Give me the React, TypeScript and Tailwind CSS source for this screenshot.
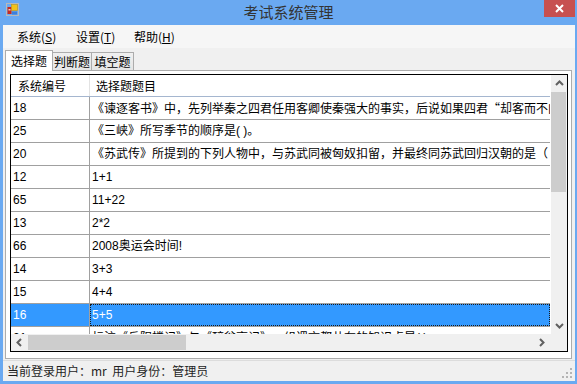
import type { ReactNode } from "react";

const Q = ({ c }: { c: string }) => (
  <span className="inline-block w-[12px] text-right font-['Noto_Sans_CJK_SC',sans-serif]">{c}</span>
);

const rows: [string, ReactNode][] = [
  [
    "18",
    <>
      《谏逐客书》中，先列举秦之四君任用客卿使秦强大的事实，后说如果四君
      <Q c="“" />
      却客而不内，疏士而不用”
    </>,
  ],
  ["25", "《三峡》所写季节的顺序是( )。"],
  ["20", "《苏武传》所提到的下列人物中，与苏武同被匈奴扣留，并最终同苏武回归汉朝的是（ ）"],
  ["12", "1+1"],
  ["65", "11+22"],
  ["13", "2*2"],
  ["66", "2008奥运会时间!"],
  ["14", "3+3"],
  ["15", "4+4"],
  ["16", "5+5"],
  ["21", "标注《岳阳楼记》与《醉翁亭记》一组课文都共有的知识点是( )"],
];

const Chevron = ({ dir }: { dir: "up" | "down" | "left" | "right" }) => {
  const pts = {
    up: "1,6 4.5,2.5 8,6",
    down: "1,3 4.5,6.5 8,3",
    left: "6,1 2.5,4.5 6,8",
    right: "3,1 6.5,4.5 3,8",
  }[dir];
  return (
    <svg width="9" height="9" viewBox="0 0 9 9">
      <polyline points={pts} fill="none" stroke="#606060" strokeWidth="2" />
    </svg>
  );
};

const AppIcon = () => (
  <svg width="13" height="13" viewBox="0 0 13 13">
    <rect x="0.5" y="0.5" width="12" height="12" fill="none" stroke="#b9b9b9" />
    <rect x="1.5" y="4" width="4" height="7" fill="#c8281e" />
    <rect x="2.5" y="6" width="2" height="1.5" fill="#f4d0c0" />
    <rect x="5.5" y="1.5" width="6" height="6" fill="#f2c21b" stroke="#c89a10" strokeWidth="0.6" />
    <rect x="6" y="8.5" width="5" height="3" fill="#3d7fd8" />
  </svg>
);

const Grid = () => (
  <div className="flex flex-col w-[558px] h-[278px] border border-black bg-white font-['Liberation_Sans','Noto_Sans_CJK_SC',sans-serif] text-[12px] text-black">
    <div className="flex h-[259px]">
      <div className="w-[539px] overflow-hidden">
        <div className="flex h-[22px] border-b border-[#a5b6cf] leading-[21px]">
          <div className="w-[79px] shrink-0 border-r border-[#e3e3e3] pl-[7px] font-['Noto_Sans_CJK_SC',sans-serif]">
            系统编号
          </div>
          <div className="pl-[6px] font-['Noto_Sans_CJK_SC',sans-serif]">选择题题目</div>
        </div>
        {rows.map(([id, text]) => {
          const sel = id === "16";
          return (
            <div
              key={id}
              className={`flex h-[23px] border-b border-[#a0a0a0] leading-[22px] whitespace-nowrap ${
                sel ? "bg-[#3399ff] text-white" : ""
              }`}
            >
              <div className="w-[79px] shrink-0 border-r border-[#a0a0a0] pl-[2px]">{id}</div>
              <div
                className={`flex-1 pl-[2px] overflow-hidden ${
                  sel ? "outline outline-1 outline-dotted outline-[#1a1a1a] -outline-offset-1" : ""
                }`}
              >
                {text}
              </div>
            </div>
          );
        })}
      </div>
      <div className="w-[17px] flex flex-col bg-[#f0f0f0] border-l border-white">
        <div className="h-[17px] flex items-center justify-center">
          <Chevron dir="up" />
        </div>
        <div className="w-[15px] h-[100px] bg-[#cdcdcd]" />
        <div className="flex-1" />
        <div className="h-[17px] flex items-center justify-center">
          <Chevron dir="down" />
        </div>
      </div>
    </div>
    <div className="flex h-[17px] bg-[#f0f0f0]">
      <div className="w-[539px] flex items-center">
        <div className="w-[17px] flex items-center justify-center">
          <Chevron dir="left" />
        </div>
        <div className="w-[158px] h-[15px] bg-[#cdcdcd]" />
        <div className="flex-1" />
        <div className="w-[17px] flex items-center justify-center">
          <Chevron dir="right" />
        </div>
      </div>
      <div className="w-[17px] bg-[#f0f0f0]" />
    </div>
  </div>
);

export default function App() {
  return (
    <div className="w-[577px] h-[384px] bg-[#6aa9f1] flex flex-col font-['Noto_Sans_CJK_SC',sans-serif] overflow-hidden">
      <div className="h-[25px] grid grid-cols-[1fr_auto_1fr] items-start">
        <div className="pl-[6px] pt-[3px]">
          <AppIcon />
        </div>
        <div className="pt-[2px] text-[15px] leading-[20px] text-[#333333]">考试系统管理</div>
        <div className="flex justify-end pr-[2px]">
          <div className="w-[31px] h-[17px] bg-[#c75050] flex items-center justify-center">
            <svg width="9" height="9" viewBox="0 0 9 9">
              <path d="M1 1 L8 8 M8 1 L1 8" stroke="white" strokeWidth="2" />
            </svg>
          </div>
        </div>
      </div>

      <div className="ml-[3px] mr-[2px] mb-[3px] flex-1 flex flex-col bg-[#f0f0f0]">
        <div className="h-[23px] flex items-center pl-[14px] bg-[#f6f6f6] text-[12px] text-black">
          <span className="w-[59px]">
            系统(<u>S</u>)
          </span>
          <span className="w-[58px]">
            设置(<u>T</u>)
          </span>
          <span>
            帮助(<u>H</u>)
          </span>
        </div>

        <div className="flex items-end h-[22px] pl-[2px] text-[12px] leading-[16px] text-black">
          <div className="relative z-10 h-[21px] -mb-px w-[48px] bg-white border border-b-0 border-[#acacac] flex items-center justify-center">
            选择题
          </div>
          <div className="h-[18px] w-[39px] bg-gradient-to-b from-[#f0f0f0] to-[#e5e5e5] border border-b-0 border-l-0 border-[#acacac] flex items-center justify-center">
            判断题
          </div>
          <div className="h-[18px] w-[42px] bg-gradient-to-b from-[#f0f0f0] to-[#e5e5e5] border border-b-0 border-l-0 border-[#acacac] flex items-center justify-center">
            填空题
          </div>
        </div>

        <div className="ml-[2px] mr-[3px] h-[289px] bg-white border border-[#acacac] pl-[4px] pt-[3px]">
          <Grid />
        </div>

        <div className="flex-1 mt-[1px] border-t border-[#dcdcdc] flex items-center justify-between pl-[4px] pr-[2px] text-[12px] text-[#1e1e1e]">
          <span>当前登录用户：mr&nbsp; 用户身份：管理员</span>
          <svg width="11" height="11" viewBox="0 0 11 11" className="self-end mb-[2px]">
            {[
              [8, 0],
              [8, 4],
              [4, 4],
              [8, 8],
              [4, 8],
              [0, 8],
            ].map(([x, y]) => (
              <rect key={`${x}-${y}`} x={x} y={y} width="2" height="2" fill="#b4b4b4" />
            ))}
          </svg>
        </div>
      </div>
    </div>
  );
}
